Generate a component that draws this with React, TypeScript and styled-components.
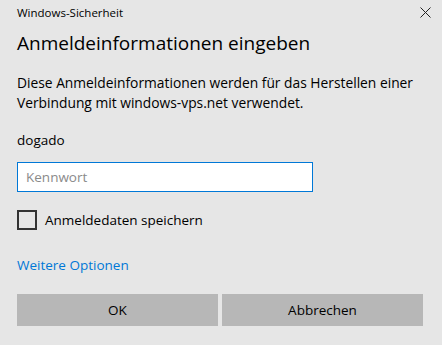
import React, { useState } from 'react';
import styled, { createGlobalStyle } from 'styled-components';

const GlobalStyle = createGlobalStyle`
  html, body {
    margin: 0;
    padding: 0;
    background: #e6e6e6;
  }
  * {
    box-sizing: border-box;
  }
`;

const Dialog = styled.div`
  width: 442px;
  height: 345px;
  background: #e6e6e6;
  font-family: "Open Sans", "Noto Sans", sans-serif;
  color: #000;
  padding: 0 19px 0 17px;
  display: flex;
  flex-direction: column;
`;

const TitleBar = styled.div`
  display: flex;
  align-items: center;
  justify-content: space-between;
  height: 24px;
  font-size: 11.5px;
  margin-right: -12px;
`;

const CloseButton = styled.button`
  width: 20px;
  height: 20px;
  padding: 0;
  border: none;
  background: transparent;
  display: flex;
  align-items: center;
  justify-content: center;
  cursor: pointer;
`;

const Heading = styled.h1`
  margin: 5px 0 0;
  font-size: 19px;
  font-weight: 400;
  line-height: 28px;
`;

const Description = styled.p`
  margin: 16px 0 0;
  font-size: 13.8px;
  line-height: 20px;
`;

const UserName = styled.div`
  margin-top: 17px;
  font-size: 13.5px;
  line-height: 20px;
`;

const PasswordInput = styled.input`
  margin-top: 12px;
  width: 296px;
  height: 30px;
  border: 1px solid #0078d7;
  background: #fff;
  padding: 0 8px;
  font-family: inherit;
  font-size: 13.5px;
  outline: none;

  &::placeholder {
    color: #8a8a8a;
  }
`;

const CheckRow = styled.label`
  margin-top: 18px;
  display: flex;
  align-items: center;
  gap: 8px;
  height: 20px;
  font-size: 13.5px;
  cursor: pointer;
`;

const Box = styled.span<{ checked: boolean }>`
  width: 20px;
  height: 20px;
  border: 2px solid #333;
  background: ${p => (p.checked ? '#333' : 'transparent')};
`;

const MoreLink = styled.a`
  margin-top: 25px;
  font-size: 13.5px;
  line-height: 20px;
  color: #0078d7;
  text-decoration: none;
  align-self: flex-start;
  cursor: pointer;
`;

const ButtonRow = styled.div`
  margin-top: 19px;
  display: grid;
  grid-template-columns: 1fr 1fr;
  gap: 4px;
`;

const Button = styled.button`
  height: 32px;
  border: none;
  background: #b7b7b7;
  font-family: inherit;
  font-size: 13.5px;
  color: #000;
  cursor: pointer;
`;

const App: React.FC = () => {
  const [remember, setRemember] = useState(false);

  return (
    <>
      <GlobalStyle />
      <Dialog>
        <TitleBar>
          <span>Windows-Sicherheit</span>
          <CloseButton aria-label="Schließen">
            <svg width="11" height="11" viewBox="0 0 11 11">
              <path d="M0.5 0.5 L10.5 10.5 M10.5 0.5 L0.5 10.5" stroke="#222" strokeWidth="1" />
            </svg>
          </CloseButton>
        </TitleBar>
        <Heading>Anmeldeinformationen eingeben</Heading>
        <Description>
          Diese Anmeldeinformationen werden für das Herstellen einer
          <br />
          Verbindung mit windows-vps.net verwendet.
        </Description>
        <UserName>dogado</UserName>
        <PasswordInput type="password" placeholder="Kennwort" />
        <CheckRow onClick={() => setRemember(!remember)}>
          <Box checked={remember} />
          Anmeldedaten speichern
        </CheckRow>
        <MoreLink>Weitere Optionen</MoreLink>
        <ButtonRow>
          <Button>OK</Button>
          <Button>Abbrechen</Button>
        </ButtonRow>
      </Dialog>
    </>
  );
};

export default App;
